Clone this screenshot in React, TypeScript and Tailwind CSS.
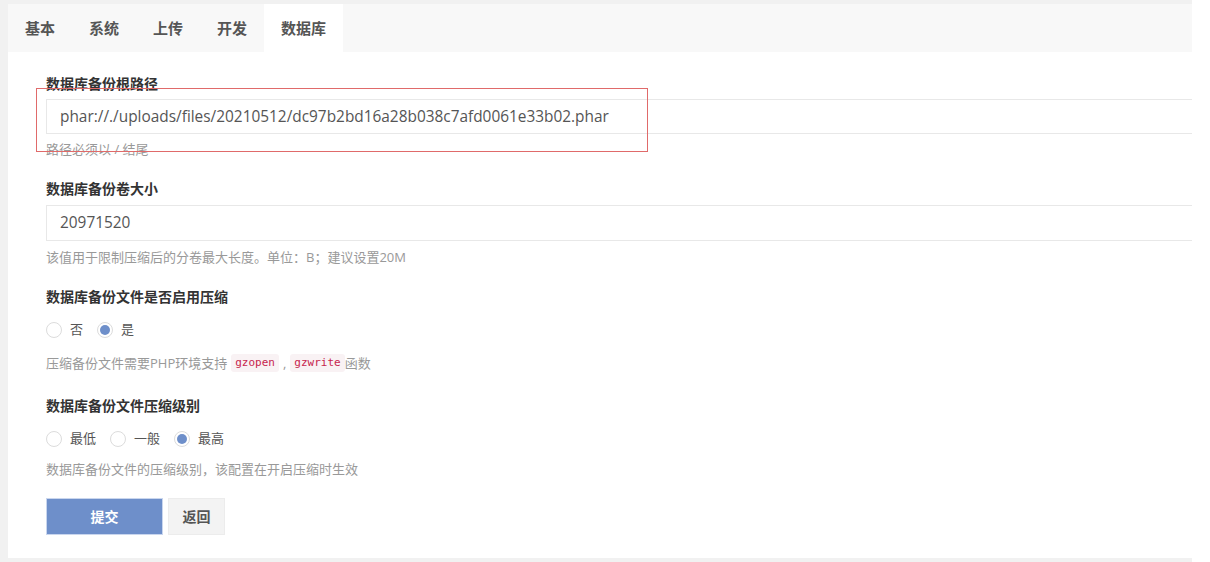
import React from "react";

const font = { fontFamily: '"Open Sans", "Noto Sans CJK SC", sans-serif' };
const mono = { fontFamily: '"DejaVu Sans Mono", monospace' };

function Radio({ checked, label }: { checked?: boolean; label: string }) {
  return (
    <label className="flex items-center mr-[14px]">
      <span className="w-[16px] h-[16px] rounded-full border border-[#dcdcdc] bg-white flex items-center justify-center">
        {checked && <span className="w-[10px] h-[10px] rounded-full bg-[#6e8fca]" />}
      </span>
      <span className="ml-[8px] text-[13px] text-[#555]">{label}</span>
    </label>
  );
}

export default function App() {
  return (
    <div className="w-[1210px] h-[562px] bg-white relative overflow-hidden" style={font}>
      <div className="w-[1192px] h-[562px] bg-[#f1f1f1] pl-[8px] pt-[4px] pb-[4px]">
        <div className="bg-white h-[554px] overflow-hidden">
          <div className="h-[48px] bg-[#f8f8f8] flex text-[15px] font-semibold text-[#555]">
            {["基本", "系统", "上传", "开发", "数据库"].map((t, i) => (
              <div key={t} className={`px-[17px] flex items-center ${i === 4 ? "bg-white" : ""}`}>
                {t}
              </div>
            ))}
          </div>
          <div className="pl-[38px] pt-[22px]">
            <div className="text-[14px] leading-[20px] font-bold text-[#333]">数据库备份根路径</div>
            <div className="mt-[5px] h-[35px] border border-[#e8e8e8] border-r-0 flex items-center pl-[13px] text-[15.4px] text-[#555]">
              phar://./uploads/files/20210512/dc97b2bd16a28b038c7afd0061e33b02.phar
            </div>
            <div className="mt-[7px] text-[13px] leading-[16px] text-[#999]">路径必须以 / 结尾</div>

            <div className="mt-[22px] text-[14px] leading-[20px] font-bold text-[#333]">数据库备份卷大小</div>
            <div className="mt-[6px] h-[36px] border border-[#e8e8e8] border-r-0 flex items-center pl-[13px] text-[15.4px] text-[#555]">
              20971520
            </div>
            <div className="mt-[8px] text-[13px] leading-[16px] text-[#999]">
              该值用于限制压缩后的分卷最大长度。单位：B；建议设置20M
            </div>

            <div className="mt-[22px] text-[14px] leading-[20px] font-bold text-[#333]">数据库备份文件是否启用压缩</div>
            <div className="mt-[13px] h-[20px] flex items-center">
              <Radio label="否" />
              <Radio label="是" checked />
            </div>
            <div className="mt-[14px] text-[13px] leading-[16px] text-[#999] flex items-center">
              压缩备份文件需要PHP环境支持
              <code className="ml-[4px] px-[4px] py-[1px] rounded-[3px] bg-[#f9f2f4] text-[#c7254e] text-[11px]" style={mono}>
                gzopen
              </code>
              <span className="mx-[4px]">,</span>
              <code className="px-[4px] py-[1px] rounded-[3px] bg-[#f9f2f4] text-[#c7254e] text-[11px]" style={mono}>
                gzwrite
              </code>
              函数
            </div>

            <div className="mt-[24px] text-[14px] leading-[20px] font-bold text-[#333]">数据库备份文件压缩级别</div>
            <div className="mt-[13px] h-[20px] flex items-center">
              <Radio label="最低" />
              <Radio label="一般" />
              <Radio label="最高" checked />
            </div>
            <div className="mt-[12px] text-[13px] leading-[16px] text-[#999]">
              数据库备份文件的压缩级别，该配置在开启压缩时生效
            </div>

            <div className="mt-[21px] flex">
              <button className="w-[117px] h-[37px] bg-[#6e8fca] border border-[#c9d6ee] text-white text-[14px] font-bold">
                提交
              </button>
              <button className="ml-[5px] w-[57px] h-[37px] bg-[#f3f3f3] border border-[#ececec] text-[#555] text-[14px] font-bold">
                返回
              </button>
            </div>
          </div>
        </div>
      </div>
      <div className="absolute left-[36px] top-[88px] w-[612px] h-[64px] border border-[#e06a6a]" />
    </div>
  );
}
